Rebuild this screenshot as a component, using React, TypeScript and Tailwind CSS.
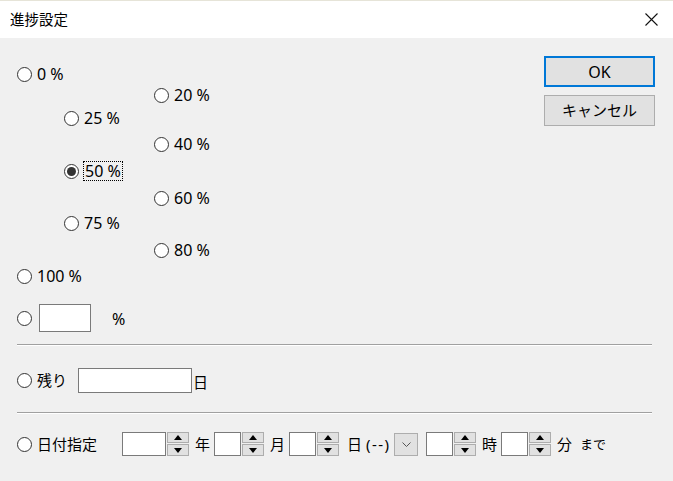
import React from "react";

const FONT = "font-['Noto_Sans','Noto_Sans_CJK_JP',sans-serif]";

function Radio({ checked }: { checked?: boolean }) {
  return (
    <span className="flex h-[15px] w-[15px] shrink-0 items-center justify-center rounded-full border border-[#333] bg-white">
      {checked ? <span className="h-[9px] w-[9px] rounded-full bg-[#333]" /> : null}
    </span>
  );
}

function TextBox({ wide }: { wide?: boolean }) {
  return <span className={`${wide ? "w-[44px]" : "w-[27px]"} h-[24px] shrink-0 border border-[#7a7a7a] bg-white`} />;
}

function Spinner() {
  return (
    <span className="ml-[1px] flex h-[24px] w-[22px] shrink-0 flex-col gap-[1px]">
      <span className="flex h-[11px] items-center justify-center border border-[#adadad] bg-[#e1e1e1]">
        <svg width="8" height="5" viewBox="0 0 8 5">
          <path d="M0 5 L4 0 L8 5 Z" fill="#000" />
        </svg>
      </span>
      <span className="flex h-[12px] items-center justify-center border border-[#adadad] bg-[#e1e1e1]">
        <svg width="8" height="5" viewBox="0 0 8 5">
          <path d="M0 0 L8 0 L4 5 Z" fill="#000" />
        </svg>
      </span>
    </span>
  );
}

const options = [
  { label: "0 %", indent: "ml-0", mt: "mt-0" },
  { label: "20 %", indent: "ml-[137px]", mt: "mt-[1px]" },
  { label: "25 %", indent: "ml-[47px]", mt: "mt-[3px]" },
  { label: "40 %", indent: "ml-[137px]", mt: "mt-[6px]" },
  { label: "50 %", indent: "ml-[47px]", mt: "mt-[7px]", checked: true },
  { label: "60 %", indent: "ml-[137px]", mt: "mt-[7px]" },
  { label: "75 %", indent: "ml-[47px]", mt: "mt-[5px]" },
  { label: "80 %", indent: "ml-[137px]", mt: "mt-[7px]" },
  { label: "100 %", indent: "ml-0", mt: "mt-[6px]" },
];

export default function App() {
  return (
    <div className={`${FONT} h-[481px] w-[673px] overflow-hidden bg-[#f0f0f0] text-[15px] leading-none text-black`}>
      {/* title bar */}
      <div className="flex h-[38px] items-center justify-between border-t border-[#e6e4d8] bg-white pl-[10px] pr-[15px]">
        <span className="text-[14.5px]">進捗設定</span>
        <svg width="13" height="13" viewBox="0 0 13 13">
          <path d="M0.5 0.5 L12.5 12.5 M12.5 0.5 L0.5 12.5" stroke="#111" strokeWidth="1.1" />
        </svg>
      </div>

      <div className="pl-[17px] pr-[18px]">
        <div className="flex">
          <div className="flex flex-1 flex-col pt-[26px] text-[16px]">
            {options.map((o) => (
              <div key={o.label} className={`flex h-[20px] items-center ${o.indent} ${o.mt}`}>
                <Radio checked={o.checked} />
                {o.checked ? (
                  <span className="ml-[4px] border border-dotted border-black px-[1px] py-[1px]">{o.label}</span>
                ) : (
                  <span className="ml-[5px]">{o.label}</span>
                )}
              </div>
            ))}
            <div className="mt-[18px] flex h-[28px] items-center">
              <Radio />
              <span className="ml-[7px] h-[28px] w-[52px] border border-[#7a7a7a] bg-white" />
              <span className="ml-[21px] pt-[2px]">%</span>
            </div>
          </div>
          <div className="flex w-[111px] flex-col gap-[8px] pt-[18px]">
            <button className="flex h-[31px] items-center justify-center border-2 border-[#0078d7] bg-[#e1e1e1] text-[16px]">OK</button>
            <button className="flex h-[31px] items-center justify-center border border-[#adadad] bg-[#e1e1e1]">
              キャンセル
            </button>
          </div>
        </div>

        <div className="mr-[3px] mt-[12px] border-t border-b border-t-[#a0a0a0] border-b-white" />

        <div className="mt-[22px] flex h-[25px] items-center">
          <Radio />
          <span className="ml-[5px] w-[41px]">残り</span>
          <span className="h-[25px] w-[114px] border border-[#7a7a7a] bg-white" />
          <span className="ml-[1px] pt-[4px]">日</span>
        </div>

        <div className="mr-[3px] mt-[19px] border-t border-b border-t-[#a0a0a0] border-b-white" />

        <div className="mt-[18px] flex h-[24px] items-center">
          <Radio />
          <span className="ml-[5px] w-[85px]">日付指定</span>
          <TextBox wide />
          <Spinner />
          <span className="ml-[6px]">年</span>
          <span className="ml-[4px]" />
          <TextBox />
          <Spinner />
          <span className="ml-[6px]">月</span>
          <span className="ml-[4px]" />
          <TextBox />
          <Spinner />
          <span className="ml-[8px] w-[47px] whitespace-nowrap">
            日 <span className="tracking-[1.5px]">(--)</span>
          </span>
          <span className="flex h-[23px] w-[24px] shrink-0 items-center justify-center border border-[#adadad] bg-[#e1e1e1]">
            <svg width="9" height="5" viewBox="0 0 9 5">
              <path d="M0.5 0.5 L4.5 4.5 L8.5 0.5" stroke="#555" fill="none" strokeWidth="1" />
            </svg>
          </span>
          <span className="ml-[8px]" />
          <TextBox />
          <Spinner />
          <span className="ml-[6px]">時</span>
          <span className="ml-[4px]" />
          <TextBox />
          <Spinner />
          <span className="ml-[6px]">分</span>
          <span className="ml-[8px] text-[13px]">まで</span>
        </div>
      </div>
    </div>
  );
}
